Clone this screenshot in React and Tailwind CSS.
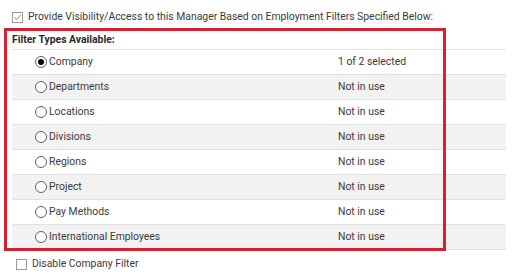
import React from "react";

const filters = [
  { name: "Company", status: "1 of 2 selected", checked: true },
  { name: "Departments", status: "Not in use" },
  { name: "Locations", status: "Not in use" },
  { name: "Divisions", status: "Not in use" },
  { name: "Regions", status: "Not in use" },
  { name: "Project", status: "Not in use" },
  { name: "Pay Methods", status: "Not in use" },
  { name: "International Employees", status: "Not in use" },
];

function Checkbox({ checked }) {
  return (
    <span className="flex items-center justify-center w-[11px] h-[11px] border border-[#9a9a9a] bg-white">
      {checked && (
        <svg width="9" height="9" viewBox="0 0 9 9" fill="none">
          <path d="M1.5 4.5 L3.7 6.7 L7.6 2" stroke="#8a8a8a" strokeWidth="1" />
        </svg>
      )}
    </span>
  );
}

function Radio({ checked }) {
  return (
    <span className="flex items-center justify-center w-[12px] h-[12px] rounded-full border border-[#606060] bg-white">
      {checked && <span className="w-[6px] h-[6px] rounded-full bg-black" />}
    </span>
  );
}

export default function App() {
  return (
    <div className="relative w-[514px] h-[274px] bg-white font-['Roboto',sans-serif] text-[10.4px] text-[#3a3a3a]">
      <div className="flex items-center gap-[5px] pl-[12px] pt-[10px] h-[24px]">
        <Checkbox checked />
        <span>Provide Visibility/Access to this Manager Based on Employment Filters Specified Below:</span>
      </div>

      <div className="ml-[12px] w-[494px] mt-[7px]">
        <div className="flex items-center h-[19px] border-b border-[#e2e2e2] font-bold text-[#2a2a2a]">
          Filter Types Available:
        </div>
        {filters.map((f, i) => (
          <div
            key={f.name}
            className={
              "flex items-center h-[25px] border-b border-[#e2e2e2] " +
              (i % 2 === 1 ? "bg-[#f2f2f2]" : "bg-white")
            }
          >
            <div className="flex items-center gap-[2px] w-[326px] pl-[23px]">
              <Radio checked={f.checked} />
              <span>{f.name}</span>
            </div>
            <span>{f.status}</span>
          </div>
        ))}
      </div>

      <div className="flex items-center gap-[5px] pl-[16px] mt-[8px] h-[12px]">
        <Checkbox />
        <span>Disable Company Filter</span>
      </div>

      <div className="absolute left-[4px] top-[28px] w-[442px] h-[223px] border-[3px] border-[#d42030]" />
    </div>
  );
}
